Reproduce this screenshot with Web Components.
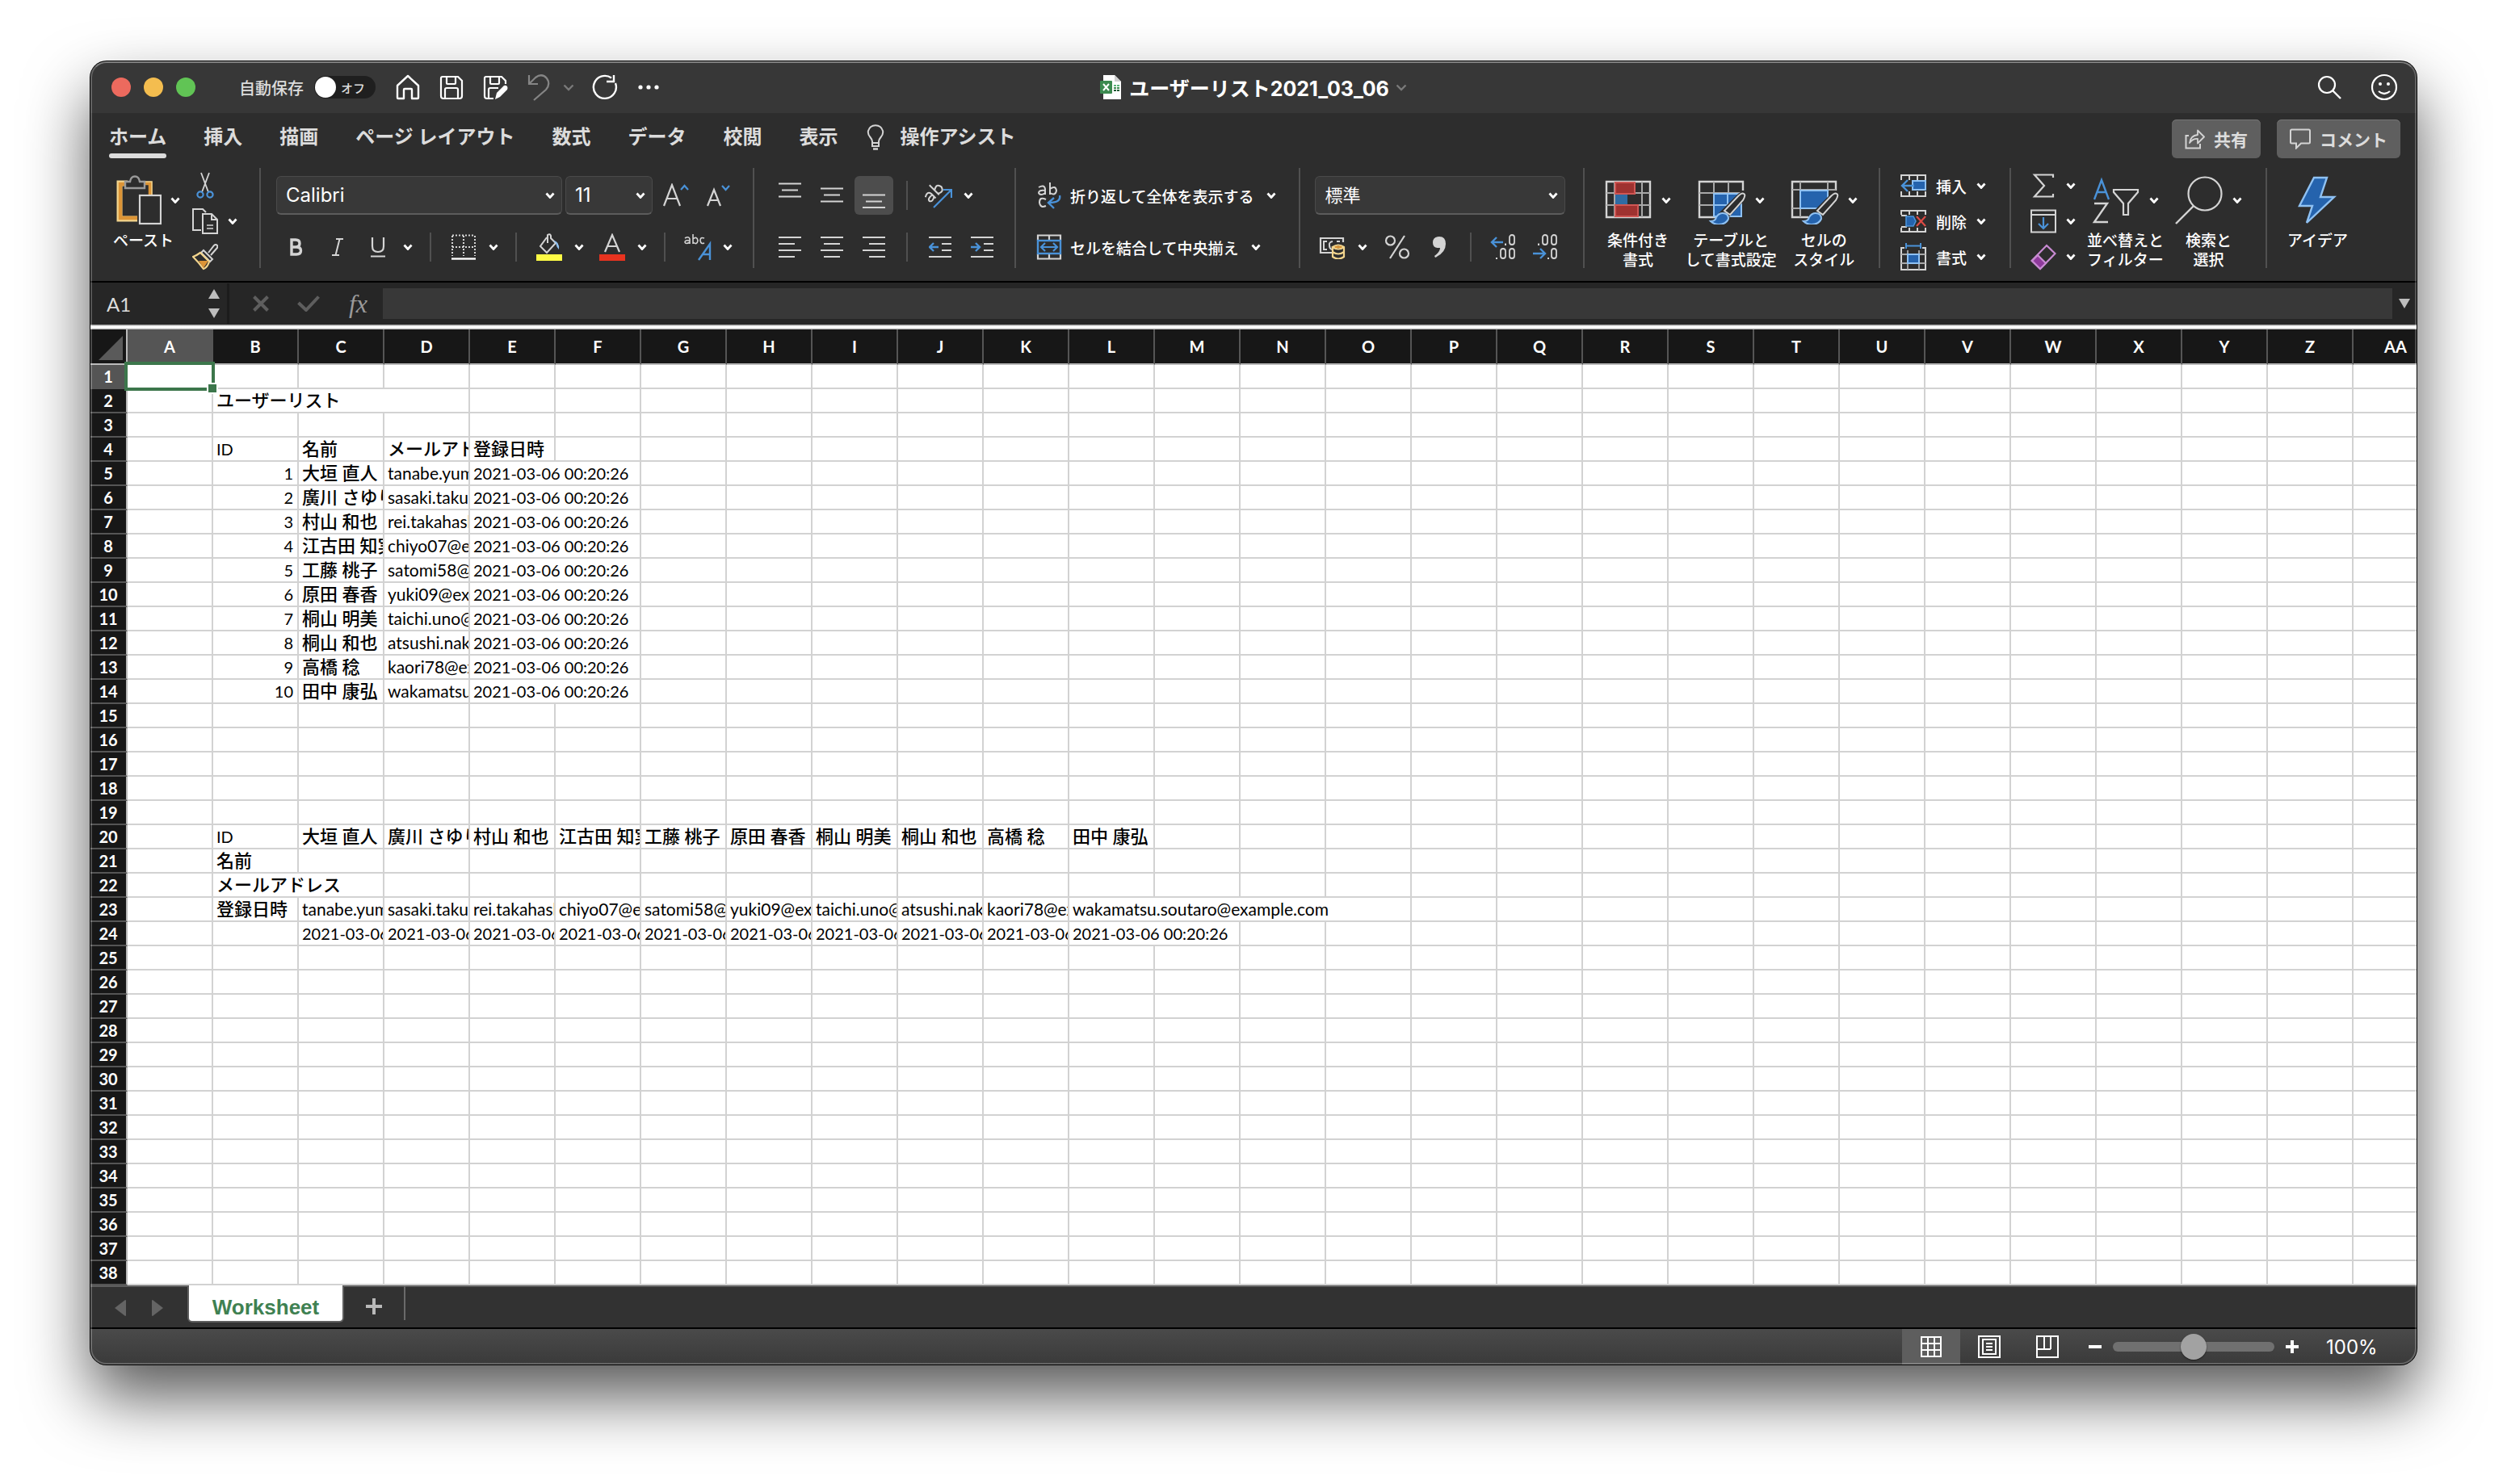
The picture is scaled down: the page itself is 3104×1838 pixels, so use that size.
<!DOCTYPE html>
<html lang="ja">
<head>
<meta charset="utf-8">
<title>ユーザーリスト2021_03_06</title>
<style>
  html { background: #fff; }
  body {
    margin: 0;
    padding: 76px 112px 148px;
    min-height: 100vh;
    box-sizing: border-box;
    overflow: hidden;
    font-family: Inter, "Noto Sans CJK JP", sans-serif;
    background: #fff;
  }
</style>
</head>
<body>
<app-window>
  <title-bar></title-bar>
  <ribbon-tabs></ribbon-tabs>
  <ribbon-bar></ribbon-bar>
  <formula-bar></formula-bar>
  <sheet-grid></sheet-grid>
  <sheet-tabs></sheet-tabs>
  <status-bar></status-bar>
</app-window>

<script>
const G = '#d4d4d4', B = '#4a92d8', LB = '#8fc1f2', FB = '#2563ad';

const ICONS = {
  chevron: [12, 8, `<path d="M1.500 1.500L6 6.500L10.500 1.500" stroke="#fff" stroke-width="2.800"/>`],
  chevronDim: [14, 9, `<path d="M1.500 1.500L7 7L12.500 1.500" stroke="#7a7a7a" stroke-width="2.400"/>`],
  home: [32, 32, `<path d="M3 14L16 2L29 14V29Q29 30 28 30H21V19Q21 18 20 18H12Q11 18 11 19V30H4Q3 30 3 29Z" stroke="#fff" stroke-width="2.400" stroke-linejoin="round"/>`],
  save: [32, 32, `<path d="M5 3H24L29 8V27Q29 30 26 30H6Q3 30 3 27V5Q3 3 5 3Z M10 3V11Q10 12 11 12H20Q21 12 21 11V3 M8 30V19Q8 17 10 17H22Q24 17 24 19V30" stroke="#fff" stroke-width="2.200"/>`],
  saveAs: [32, 32, `<path d="M14 30H6Q3 30 3 27V5Q3 3 5 3H24L29 8V12 M10 3V11Q10 12 11 12H20Q21 12 21 11V3 M8 30V19Q8 17 10 17H20" stroke="#fff" stroke-width="2.200"/><path d="M16 31L18 23L27 14Q29 13 31 15Q32 17 31 19L22 28Z" fill="#fff"/>`],
  undo: [32, 34, `<path d="M4 2V13H15 M4 13L12 5Q20 -1 26 6Q31 13 25 20L10 33" stroke="#858585" stroke-width="2.200"/>`],
  redo: [32, 32, `<path d="M24 4.500A14 14 0 1 0 29 11 M27 1V9H18" stroke="#fff" stroke-width="2.400"/>`],
  dots: [32, 8, `<g fill="#fff"><circle cx="6" cy="4" r="2.600"/><circle cx="16" cy="4" r="2.600"/><circle cx="26" cy="4" r="2.600"/></g>`],
  file: [26, 30, `<path d="M4 0H18L26 8V30H4Z" fill="#fff"/><path d="M18 0V8H26Z" fill="#cfcfcf"/><rect y="7" width="15" height="16" rx="1" fill="#3c8a50"/><path d="M4 11L11 19M11 11L4 19" stroke="#fff" stroke-width="2"/><path d="M17 12H20V14H17ZM21 12H24V14H21Z" fill="#5ab479"/><path d="M17 15H20V17H17ZM21 15H24V17H21Z" fill="#3c8a50"/><path d="M17 18H20V20H17ZM21 18H24V20H21Z" fill="#1f5a33"/>`],
  search: [32, 32, `<circle cx="13" cy="13" r="10" stroke="#fff" stroke-width="2.200"/><path d="M20 20L30 30" stroke="#fff" stroke-width="2.400"/>`],
  smile: [34, 34, `<circle cx="17" cy="17" r="15" stroke="#fff" stroke-width="2.200"/><circle cx="12" cy="13" r="2" fill="#fff"/><circle cx="22" cy="13" r="2" fill="#fff"/><path d="M10 22Q17 28 24 22" stroke="#fff" stroke-width="2.200"/>`],
  bulb: [22, 32, `<path d="M7 23V21Q7 19 4.500 16Q1 12 2 8Q4 1.200 11 1.200Q18 1.200 20 8Q21 12 17.500 16Q15 19 15 21V27H7V23H15" stroke="${G}" stroke-width="2"/><path d="M8 30.500H14" stroke="${G}" stroke-width="2.400"/>`],
  share: [25, 26, `<path d="M5 9H1.500V24.500H19V19" stroke="${G}" stroke-width="2"/><path d="M6 18Q7 9 16 8V2.500L24 10.500L16 18.500V13Q10 12.500 6 18Z" stroke="${G}" stroke-width="1.800" stroke-linejoin="round"/>`],
  comment: [26, 26, `<path d="M2.500 1.500H23.500Q25 1.500 25 3V17Q25 18.500 23.500 18.500H14L8 24.500V18.500H2.500Q1 18.500 1 17V3Q1 1.500 2.500 1.500Z" stroke="${G}" stroke-width="2"/>`],
  paste: [60, 62, `<path d="M18 10H8V54H30" stroke="#f3d58d" stroke-width="7"/><path d="M18 11H9V53H30 M36 10H46V24" stroke="#dc9436" stroke-width="4.500"/><path d="M36 8H48V24" stroke="#f3d58d" stroke-width="1.500"/><path d="M15 16V8H21Q22 1.500 27 1.500Q32 1.500 33 8H39V16Z" fill="#2d2d2d" stroke="#9a9a9a" stroke-width="2.400"/><rect x="33" y="25" width="26" height="35" fill="#2d2d2d" stroke="${G}" stroke-width="2.200"/>`],
  cut: [32, 34, `<path d="M11 1L20 25 M21 1L12 25" stroke="${G}" stroke-width="1.800"/><circle cx="10" cy="28" r="3.600" stroke="${B}" stroke-width="2.200"/><circle cx="22" cy="28" r="3.600" stroke="${B}" stroke-width="2.200"/>`],
  copy: [32, 34, `<path d="M11 28H1V2H13L17 6" stroke="${G}" stroke-width="2"/><path d="M13 8H24L31 15V32H13Z M24 8V15H31" stroke="${G}" stroke-width="2"/><path d="M18 22H26M18 26H26" stroke="${G}" stroke-width="1.600"/>`],
  brush: [32, 34, `<path d="M20 12L27 3Q29 1 31 3Q32 5 30 7L23 15 M14 9L25 20L22 23L11 12Z" stroke="${G}" stroke-width="2"/><path d="M10 12L21 23Q19 30 14 32Q8 24 1 17Q6 15 10 12Z" stroke="#f3d58d" stroke-width="2.200"/><path d="M8 22H20L14 31Z" fill="#dc9436"/>`],
  growA: [34, 30, `<path d="M3 28L13 2L23 28 M7 19H19" stroke="${G}" stroke-width="2.200"/><path d="M24 8L28.500 3L33 8" stroke="${B}" stroke-width="2.200"/>`],
  shrinkA: [34, 30, `<path d="M5 28L13 8L21 28 M8 21H18" stroke="${G}" stroke-width="2.200"/><path d="M23 3L27.500 8L32 3" stroke="${B}" stroke-width="2.200"/>`],
  bold: [20, 24, `<path d="M5 3H10Q15 3 15 7.500Q15 12 10 12H5ZM5 12H11Q16.500 12 16.500 16.500Q16.500 21 11 21H5Z" stroke="${G}" stroke-width="3.400"/>`],
  italic: [20, 24, `<path d="M8 2H17M3 22H12M12.500 2L7.500 22" stroke="${G}" stroke-width="2"/>`],
  underline: [20, 26, `<path d="M3 1V12Q3 19 10 19Q17 19 17 12V1" stroke="${G}" stroke-width="2.200"/><path d="M1 24.500H19" stroke="${G}" stroke-width="2"/>`],
  border: [32, 32, `<path d="M2 1.500H30M2 16H30" stroke="${G}" stroke-width="2" stroke-dasharray="2 2"/><path d="M2 2V27M16 2V27M30 2V27" stroke="${G}" stroke-width="2" stroke-dasharray="2 2"/><path d="M1 30.500H31" stroke="#fff" stroke-width="2.400"/>`],
  fill: [34, 34, `<path d="M14 5L6 16L14 24L25 12L19 6V3Q18 0 15 2V12" stroke="${G}" stroke-width="2"/><path d="M22 9Q30 10 29 20Q26 17 25 12Z" fill="${LB}"/><rect x="1" y="26" width="32" height="8" fill="#fefb45"/>`],
  fontColor: [34, 34, `<path d="M8 23L17 2L26 23M11 16H23" stroke="${G}" stroke-width="2.200"/><rect x="1" y="26" width="32" height="8" fill="#e8331f"/>`],
  phonetic: [36, 34, `<g fill="none" stroke="${G}" stroke-width="1.600"><path d="M2 6Q7 3 8 7V13M8 9Q2 8 2 11Q3 14 8 11M12 1V13M12 7Q17 3 18 9Q17 15 12 11M26 6Q21 4 21 9Q22 14 26 12"/></g><path d="M19 33L33 13V33M24 26H33" stroke="${B}" stroke-width="2.400"/>`],
  alTop: [28, 32, `<path d="M0 1.500H28M4 9.500H24M0 17.500H28" stroke="${G}" stroke-width="2.200"/>`],
  alMid: [28, 32, `<path d="M0 7.500H28M4 15.500H24M0 23.500H28" stroke="${G}" stroke-width="2.200"/>`],
  alBot: [28, 32, `<path d="M0 15.500H28M4 23.500H24M0 31H28" stroke="${G}" stroke-width="2.200"/>`],
  left: [28, 28, `<path d="M0 2H28M0 10H20M0 18H28M0 26H20" stroke="${G}" stroke-width="2.200"/>`],
  center: [28, 28, `<path d="M0 2H28M4 10H24M0 18H28M4 26H24" stroke="${G}" stroke-width="2.200"/>`],
  right: [28, 28, `<path d="M0 2H28M8 10H28M0 18H28M8 26H28" stroke="${G}" stroke-width="2.200"/>`],
  outdent: [28, 28, `<path d="M0 2H28M16 10H28M16 18H28M0 26H28" stroke="${G}" stroke-width="2.200"/><path d="M12 14H1M6 9L1 14L6 19" stroke="${B}" stroke-width="2.400"/>`],
  indent: [28, 28, `<path d="M0 2H28M16 10H28M16 18H28M0 26H28" stroke="${G}" stroke-width="2.200"/><path d="M0 14H11M6 9L11 14L6 19" stroke="${B}" stroke-width="2.400"/>`],
  orient: [34, 32, `<g transform="rotate(-45 10 16)" stroke="${G}" stroke-width="2"><path d="M2 11Q9 7 10 13V21M10 15Q2 14 2 18Q4 22 10 18M16 4V21M16 13Q24 8 25 16Q23 23 16 19"/></g><path d="M11 31L32 10M23 9H33V19" stroke="${B}" stroke-width="2.200"/>`],
  wrap: [32, 34, `<g stroke="${G}" stroke-width="2"><path d="M3 7Q10 3 11 9V16M11 11Q3 10 3 14Q5 18 11 14M17 1V16M17 9Q24 4 25 11Q24 18 17 14M12 22Q4 18 4 26Q5 33 12 30"/></g><path d="M29 17Q31 26 16 26M22 20L15 26L22 33" stroke="${B}" stroke-width="2.400"/>`],
  merge: [32, 32, `<path d="M2 8V1.500H30V8M16 1V8M2 24V30.500H30V24M16 24V31" stroke="${G}" stroke-width="2.200"/><rect x="2" y="8" width="28" height="16" stroke="${B}" stroke-width="2.400"/><path d="M7 16H25M11 11L6 16L11 21M21 11L26 16L21 21" stroke="${B}" stroke-width="2.200"/>`],
  currency: [34, 30, `<path d="M30 9V4H2V22H16" stroke="${G}" stroke-width="2.200"/><path d="M10 8H6V18H10M22 8H26M17 8Q12 9 13 13Q13 17 16 18" stroke="${G}" stroke-width="2"/><path d="M17 15V27Q24 32 31 27V15Q24 10 17 15Q24 20 31 15M17 21Q24 26 31 21" fill="#2d2d2d" stroke="#f3d58d" stroke-width="2.200"/><path d="M20 15H28" stroke="#dc9436" stroke-width="2.400"/>`],
  percent: [32, 32, `<circle cx="7.500" cy="8" r="5.500" stroke="${G}" stroke-width="2.200"/><circle cx="24.500" cy="24" r="5.500" stroke="${G}" stroke-width="2.200"/><path d="M25 2L7 30" stroke="${G}" stroke-width="2.200"/>`],
  comma: [18, 28, `<path d="M9 1Q17 1 17 10Q17 21 4 27L3 25Q10 20 10 15Q1 16 1 8.500Q1 1 9 1Z" fill="${G}"/>`],
  decInc: [34, 34, `<g stroke="${G}" stroke-width="1.800"><rect x="25" y="2" width="6" height="12" rx="3"/><rect x="14" y="19" width="6" height="12" rx="3"/><rect x="25" y="19" width="6" height="12" rx="3"/></g><path d="M19 12.500H21V15H19ZM8 30H10V32H8Z" fill="${G}"/><path d="M17 11H3M9 5L3 11L9 17" stroke="${B}" stroke-width="2.400"/>`],
  decDec: [34, 34, `<g stroke="${G}" stroke-width="1.800"><rect x="14" y="2" width="6" height="12" rx="3"/><rect x="25" y="2" width="6" height="12" rx="3"/><rect x="25" y="19" width="6" height="12" rx="3"/></g><path d="M8 12.500H10V15H8ZM20 30H22V32H20Z" fill="${G}"/><path d="M2 25H17M11 19L17 25L11 31" stroke="${B}" stroke-width="2.400"/>`],
  cond: [60, 60, `<path d="M3 7H57V51H3Z" stroke="${G}" stroke-width="2.400"/><path d="M3 21H57M3 36H57M13 7V51M47 7V51" stroke="#a8a8a8" stroke-width="2"/><rect x="14" y="8" width="24" height="14" fill="#9f3230" stroke="#cf5754" stroke-width="2"/><rect x="14" y="23" width="15" height="12" fill="#2f6ba3"/><rect x="14" y="36" width="28" height="14" fill="#9f3230" stroke="#cf5754" stroke-width="2"/>`],
  table: [60, 60, `<path d="M56 18V7H2V51H22" stroke="${G}" stroke-width="2.400"/><path d="M2 21H56M2 36H20M20 7V51M38 7V21" stroke="#a8a8a8" stroke-width="2"/><path d="M20 22H54V50H20Z" fill="${FB}" stroke="${LB}" stroke-width="2"/><path d="M20 36H50M37 22V50" stroke="${LB}" stroke-width="2"/><path d="M58 20Q62 22 58 30L36 54L26 46L50 22Q55 18 58 20Z" fill="#2d2d2d"/><path d="M57 22Q60 23 56 30L40 48L33 43L50 25Q55 20 57 22Z" stroke="${G}" stroke-width="2"/><path d="M31 46Q38 46 38 53Q35 60 26 60Q20 60 16 56Q22 56 23 51Q26 46 31 46Z" fill="${FB}" stroke="${LB}" stroke-width="2"/>`],
  style: [60, 60, `<path d="M56 18V7H2V51H22" stroke="${G}" stroke-width="2.400"/><path d="M2 17H56M2 40H20M12 7V51M46 7V17" stroke="#a8a8a8" stroke-width="2"/><path d="M12 18H46V40H12Z" fill="${FB}" stroke="${LB}" stroke-width="2"/><path d="M58 20Q62 22 58 30L36 54L26 46L50 22Q55 18 58 20Z" fill="#2d2d2d"/><path d="M57 22Q60 23 56 30L40 48L33 43L50 25Q55 20 57 22Z" stroke="${G}" stroke-width="2"/><path d="M31 46Q38 46 38 53Q35 60 26 60Q20 60 16 56Q22 56 23 51Q26 46 31 46Z" fill="${FB}" stroke="${LB}" stroke-width="2"/>`],
  insert: [32, 30, `<path d="M1 8V2H31V8M1 22V28H31V22M11 2V8M21 2V8M11 22V28M21 22V28" stroke="${G}" stroke-width="2"/><rect x="15" y="9" width="16" height="11" fill="${FB}" stroke="${LB}" stroke-width="2"/><path d="M17 15H2M9 8L2 15L9 22" stroke="${B}" stroke-width="2.400"/>`],
  remove: [32, 30, `<path d="M1 7V2H31V7M11 2V7M21 2V7M1 23V28H31V23M11 23V28M21 23V28M1 8H8M1 22H8" stroke="${G}" stroke-width="2"/><path d="M7 9H16L19 15L16 21H7Z" fill="${FB}" stroke="${B}" stroke-width="1.600"/><path d="M20 9L31 21M31 9L20 21" stroke="#dd4b45" stroke-width="2.200"/>`],
  format: [32, 34, `<path d="M5 6H1V33H31V6H27" stroke="${G}" stroke-width="2"/><path d="M1 14H31M1 25H31M9 9V33M23 9V33" stroke="#a8a8a8" stroke-width="1.800"/><rect x="9" y="14" width="14" height="11" fill="${FB}" stroke="${LB}" stroke-width="2"/><path d="M7 0V7M25 0V7M7 3.500H25" stroke="${B}" stroke-width="2"/>`],
  sigma: [32, 30, `<path d="M28 5V1.500H5L17 15L5 28.500H28V25" stroke="${G}" stroke-width="2.200"/>`],
  fillDown: [32, 30, `<path d="M1 1.500H31V28.500H1ZM1 7H31" stroke="${G}" stroke-width="2"/><path d="M16 10V24M10 18L16 24L22 18" stroke="${B}" stroke-width="2.200"/>`],
  eraser: [32, 34, `<path d="M1.500 22L20 3L30.500 13L12 32Z" stroke="#c88bd2" stroke-width="2.200"/><path d="M2 22L9 15L19 25L12 32Z" fill="#8f3a9c" stroke="#c88bd2" stroke-width="2.200"/>`],
  sort: [60, 60, `<path d="M3 29L12 5L21 29M6 20H18" stroke="${B}" stroke-width="2.400"/><path d="M3 34H19L3 57H20" stroke="${G}" stroke-width="2.400"/><path d="M27 17H57V20L45 34V48H39V34L27 20Z" stroke="${G}" stroke-width="2.200"/>`],
  find: [60, 60, `<circle cx="37" cy="22" r="20.500" stroke="${G}" stroke-width="2.200"/><path d="M23 37L1 59" stroke="${G}" stroke-width="2.400"/>`],
  idea: [60, 60, `<path d="M26 2H42L34 26H51L17 58L24 37H8Z" fill="${FB}" stroke="${LB}" stroke-width="2.400"/>`],
  cancel: [20, 20, `<path d="M1.500 1.500L18.500 18.500M18.500 1.500L1.500 18.500" stroke="#5e5e5e" stroke-width="4"/>`],
  check: [28, 20, `<path d="M1.500 9L11 18L26.500 1.500" stroke="#5e5e5e" stroke-width="4"/>`],
  up: [14, 12, `<path d="M7 0L14 12H0Z" fill="#bdbdbd"/>`],
  down: [14, 12, `<path d="M7 12L14 0H0Z" fill="#bdbdbd"/>`],
  corner: [30, 30, `<path d="M30 0V30H0Z" fill="#5a5a5a"/>`],
  prev: [14, 20, `<path d="M14 1Q14 0 13 0L0 10L13 20Q14 20 14 19Z" fill="#646464"/>`],
  next: [14, 20, `<path d="M0 1Q0 0 1 0L14 10L1 20Q0 20 0 19Z" fill="#646464"/>`],
  plus: [20, 20, `<path d="M10 0V20M0 10H20" stroke="#b9b9b9" stroke-width="4"/>`],
  viewGrid: [28, 28, `<path d="M2 2H26V26H2ZM2 10H26M2 18H26M10 2V26M18 2V26" stroke="#fff" stroke-width="2"/>`],
  viewPage: [28, 28, `<path d="M1 1H27V27H1ZM6 5H22V23H6ZM10 10H18M10 14H18M10 18H18" stroke="#fff" stroke-width="2"/>`],
  viewBreak: [28, 28, `<path d="M1 1H27V27H1ZM10 2V17M18 2V17M1 17H18" stroke="#fff" stroke-width="2"/>`],
  zoomOut: [16, 16, `<path d="M0 8H16" stroke="#fff" stroke-width="4"/>`],
  zoomIn: [16, 16, `<path d="M8 0V16M0 8H16" stroke="#fff" stroke-width="4"/>`]
};

const BASE = `
  :host, *, *::before, *::after { box-sizing: border-box; }
  button, input, select { font: inherit; color: inherit; background: none; border: 0; padding: 0; margin: 0; }
  button { display: flex; align-items: center; justify-content: center; }
`;

function define(name, css, html) {
  const tpl = document.createElement('template');
  customElements.define(name, class extends HTMLElement {
    connectedCallback() {
      if (this.shadowRoot) return;
      tpl.innerHTML = `<style>${BASE}${css}</style>${typeof html === 'function' ? html(this) : html}`;
      this.attachShadow({ mode: 'open' }).append(tpl.content.cloneNode(true));
    }
  });
}

const icon = n => `<ui-icon name="${n}"></ui-icon>`;

define('ui-icon', `:host { display: block; flex: none; line-height: 0; } svg { display: block; }`,
  el => {
    const [w, h, body] = ICONS[el.getAttribute('name')];
    return `<svg width="${w}" height="${h}" viewBox="0 0 ${w} ${h}" fill="none" aria-hidden="true">${body}</svg>`;
  });

define('app-window', `
  :host {
    display: flex; flex-direction: column; position: relative; overflow: hidden;
    border-radius: 20px; background: #2d2d2d; color: #fff;
    box-shadow: 0 0 0 1px #000, 0 40px 80px rgba(0, 0, 0, .66);
  }
  :host::after {
    content: ""; position: absolute; inset: 0; pointer-events: none;
    border: 2px solid rgba(255, 255, 255, .22); border-top-color: rgba(255, 255, 255, .36); border-radius: 20px;
  }
`, `<slot></slot>`);

define('title-bar', `
  :host { display: grid; grid-template-columns: 1fr auto 1fr; align-items: center; height: 64px; background: #373737; }
  .left, .quick, .title, .right, .auto, .lights, .undo { display: flex; align-items: center; }
  .left { padding-left: 26px; }
  .lights { gap: 16px; margin-right: 54px; }
  .lights button { width: 24px; height: 24px; border-radius: 50%; }
  .close { background: #ec6a5e; } .min { background: #f4bd4f; } .max { background: #61c455; }
  .auto { gap: 13px; font-size: 20px; font-weight: 500; color: #dcdcdc; margin-right: 24px; }
  .switch { display: flex; align-items: center; gap: 6px; width: 76px; height: 28px; border-radius: 14px; background: #1f1f1f; font-size: 15px; padding-left: 1px; }
  .switch input { appearance: none; width: 26px; height: 26px; border-radius: 50%; background: #fff; }
  .quick { gap: 22px; }
  .undo { gap: 14px; }
  .title { gap: 10px; font-size: 25px; font-weight: 700; }
  .name { display: flex; align-items: center; gap: 8px; }
  h1 { font: inherit; margin: 0; white-space: nowrap; }
  .right { justify-content: flex-end; gap: 35px; padding-right: 23px; }
`, `
  <div class="left">
    <div class="lights"><button class="close" aria-label="閉じる"></button><button class="min" aria-label="しまう"></button><button class="max" aria-label="拡大"></button></div>
    <label class="auto">自動保存<span class="switch"><input type="checkbox" role="switch">オフ</span></label>
    <div class="quick">
      <button aria-label="ホーム">${icon('home')}</button>
      <button aria-label="保存">${icon('save')}</button>
      <button aria-label="別名で保存">${icon('saveAs')}</button>
      <div class="undo"><button aria-label="元に戻す">${icon('undo')}</button><button aria-label="元に戻す履歴">${icon('chevronDim')}</button></div>
      <button aria-label="やり直す">${icon('redo')}</button>
      <button aria-label="その他">${icon('dots')}</button>
    </div>
  </div>
  <div class="title">${icon('file')}<div class="name"><h1>ユーザーリスト2021_03_06</h1>${icon('chevronDim')}</div></div>
  <div class="right"><button aria-label="検索">${icon('search')}</button><button aria-label="フィードバック">${icon('smile')}</button></div>
`);

define('ribbon-tabs', `
  :host { display: flex; justify-content: space-between; height: 68px; padding: 0 20px 0 23px; font-size: 24px; font-weight: 700; color: #dcdcdc; }
  nav, .tabs { display: flex; gap: 46px; }
  nav { gap: 36px; }
  a { color: inherit; text-decoration: none; line-height: 36px; padding-top: 12px; white-space: nowrap; }
  a[aria-current]::after { content: ""; display: block; height: 6px; margin-top: 2px; border-radius: 3px; background: #dcdcdc; }
  .assist { display: flex; align-items: center; gap: 19px; height: 48px; }
  .actions { display: flex; gap: 20px; padding-top: 8px; }
  .actions button { height: 48px; gap: 11px; padding: 0 16px; border-radius: 6px; background: #5f5f5f; font-size: 21px; box-shadow: inset 0 1px #747474; }
`, `
  <nav>
    <div class="tabs">
      <a href="#" aria-current="page">ホーム</a><a href="#">挿入</a><a href="#">描画</a><a href="#">ページ レイアウト</a><a href="#">数式</a><a href="#">データ</a><a href="#">校閲</a><a href="#">表示</a>
    </div>
    <a href="#" class="assist">${icon('bulb')}操作アシスト</a>
  </nav>
  <div class="actions"><button>${icon('share')}共有</button><button>${icon('comment')}コメント</button></div>
`);

define('ribbon-group', `
  :host { display: flex; height: 124px; border-right: 2px solid #505050; }
  :host([last]) { border-right: 0; }
`, `<slot></slot>`);

define('tool-button', `
  :host { display: block; flex: none; }
  button { width: 48px; height: 48px; border-radius: 6px; }
  button[aria-pressed] { background: #4d4d4d; }
`, el => `<button aria-label="${el.getAttribute('label')}"${el.hasAttribute('pressed') ? ' aria-pressed="true"' : ''}>${icon(el.getAttribute('icon'))}</button>`);

define('split-button', `
  :host { display: flex; flex: none; }
  .main { width: 44px; height: 48px; }
  .more { width: 30px; height: 48px; }
`, el => `<button class="main" aria-label="${el.getAttribute('label')}">${icon(el.getAttribute('icon'))}</button><button class="more" aria-label="${el.getAttribute('label')}のオプション">${icon('chevron')}</button>`);

define('wide-button', `
  :host { display: flex; flex: none; font-size: 19px; font-weight: 500; }
  button { height: 48px; white-space: nowrap; }
  .pic { width: 44px; display: flex; justify-content: center; margin-right: 4px; }
  ui-icon[name=chevron] { margin-left: 16px; }
`, el => `<button><span class="pic">${icon(el.getAttribute('icon'))}</span><slot></slot>${icon('chevron')}</button>`);

define('stack-button', `
  :host { display: block; flex: none; font-size: 19px; font-weight: 500; }
  button { height: 44px; gap: 12px; white-space: nowrap; }
  .pic { width: 32px; display: flex; justify-content: center; }
`, el => `<button${el.hasAttribute('label') ? ` aria-label="${el.getAttribute('label')}"` : ''}><span class="pic">${icon(el.getAttribute('icon'))}</span>${el.hasAttribute('label') ? '' : '<slot></slot>'}${el.hasAttribute('plain') ? '' : icon('chevron')}</button>`);

define('big-button', `
  :host { display: block; flex: none; font-size: 19px; font-weight: 500; }
  button { flex-direction: column; align-items: center; padding-top: 10px; line-height: 24px; }
  :host([start]) button { align-items: flex-start; }
  .pic { display: flex; align-items: center; gap: 11px; height: 60px; margin-bottom: 9px; }
`, el => `<button><span class="pic">${icon(el.getAttribute('icon'))}${el.hasAttribute('plain') ? '' : icon('chevron')}</span><slot></slot></button>`);

define('drop-down', `
  :host { display: grid; align-items: center; height: 48px; border-radius: 6px; background: #383838; border: 1px solid #4a4a4a; border-bottom: 2px solid #5c5c5c; font-size: 24px; }
  select { grid-area: 1 / 1; appearance: none; width: 100%; height: 100%; padding-left: 11px; outline: 0; }
  ui-icon { grid-area: 1 / 1; justify-self: end; margin-right: 8px; pointer-events: none; }
`, el => `<select aria-label="${el.getAttribute('label')}"><option>${el.getAttribute('value')}</option></select>${icon('chevron')}`);

define('ribbon-bar', `
  :host { display: flex; padding-bottom: 16px; border-bottom: 2px solid #000; color: #fff; }
  .rows { display: flex; flex-direction: column; gap: 16px; padding-top: 10px; }
  .row { display: flex; align-items: center; gap: 4px; height: 48px; }
  .row i { flex: none; width: 2px; height: 36px; background: #505050; margin: 0 14px 0 8px; }
  .stack { display: flex; flex-direction: column; align-items: flex-start; }
  .paste { padding: 0 27px 0 28px; } .paste .stack { margin-left: 15px; }
  .font { padding: 0 16px 0 19px; }
  .align { padding: 0 16px 0 20px; } .align .row i { margin: 0 12px; }
  .wrap { padding: 0 28px 0 19px; }
  .num { padding: 0 22px 0 18px; } .num .row i { margin: 0 11px 0 10px; }
  .styles { padding: 0 26px 0 24px; gap: 17px; }
  .cells { padding: 0 29px 0 25px; }
  .edit { padding: 0 29px 0 24px; gap: 14px; }
  .idea { padding-left: 25px; }
  .family { width: 354px; } .size { width: 108px; } .format { width: 310px; font-size: 22px; }
`, `
  <ribbon-group class="paste">
    <big-button icon="paste" start>ペースト</big-button>
    <div class="stack">
      <stack-button icon="cut" label="切り取り" plain></stack-button>
      <stack-button icon="copy" label="コピー"></stack-button>
      <stack-button icon="brush" label="書式のコピー" plain></stack-button>
    </div>
  </ribbon-group>
  <ribbon-group class="font"><div class="rows">
    <div class="row"><drop-down class="family" label="フォント" value="Calibri"></drop-down><drop-down class="size" label="サイズ" value="11"></drop-down><tool-button icon="growA" label="拡大"></tool-button><tool-button icon="shrinkA" label="縮小"></tool-button></div>
    <div class="row"><tool-button icon="bold" label="太字"></tool-button><tool-button icon="italic" label="斜体"></tool-button><split-button icon="underline" label="下線"></split-button><i></i><split-button icon="border" label="罫線"></split-button><i></i><split-button icon="fill" label="塗りつぶし"></split-button><split-button icon="fontColor" label="文字色"></split-button><i></i><split-button icon="phonetic" label="ふりがな"></split-button></div>
  </div></ribbon-group>
  <ribbon-group class="align"><div class="rows">
    <div class="row"><tool-button icon="alTop" label="上揃え"></tool-button><tool-button icon="alMid" label="上下中央"></tool-button><tool-button icon="alBot" label="下揃え" pressed></tool-button><i></i><split-button icon="orient" label="方向"></split-button></div>
    <div class="row"><tool-button icon="left" label="左揃え"></tool-button><tool-button icon="center" label="中央揃え"></tool-button><tool-button icon="right" label="右揃え"></tool-button><i></i><tool-button icon="outdent" label="字下げ解除"></tool-button><tool-button icon="indent" label="字下げ"></tool-button></div>
  </div></ribbon-group>
  <ribbon-group class="wrap"><div class="rows">
    <wide-button icon="wrap">折り返して全体を表示する</wide-button>
    <wide-button icon="merge">セルを結合して中央揃え</wide-button>
  </div></ribbon-group>
  <ribbon-group class="num"><div class="rows">
    <drop-down class="format" label="表示形式" value="標準"></drop-down>
    <div class="row"><split-button icon="currency" label="通貨"></split-button><tool-button icon="percent" label="パーセント"></tool-button><tool-button icon="comma" label="桁区切り"></tool-button><i></i><tool-button icon="decInc" label="小数点以下を増やす"></tool-button><tool-button icon="decDec" label="小数点以下を減らす"></tool-button></div>
  </div></ribbon-group>
  <ribbon-group class="styles">
    <big-button icon="cond">条件付き<br>書式</big-button>
    <big-button icon="table">テーブルと<br>して書式設定</big-button>
    <big-button icon="style">セルの<br>スタイル</big-button>
  </ribbon-group>
  <ribbon-group class="cells"><div class="stack">
    <stack-button icon="insert">挿入</stack-button>
    <stack-button icon="remove">削除</stack-button>
    <stack-button icon="format">書式</stack-button>
  </div></ribbon-group>
  <ribbon-group class="edit">
    <div class="stack">
      <stack-button icon="sigma" label="合計"></stack-button>
      <stack-button icon="fillDown" label="フィル"></stack-button>
      <stack-button icon="eraser" label="クリア"></stack-button>
    </div>
    <big-button icon="sort">並べ替えと<br>フィルター</big-button>
    <big-button icon="find">検索と<br>選択</big-button>
  </ribbon-group>
  <ribbon-group class="idea" last><big-button icon="idea" plain>アイデア</big-button></ribbon-group>
`);

define('formula-bar', `
  :host { display: flex; align-items: center; height: 52px; background: #262626; }
  .name { display: flex; align-items: center; width: 172px; height: 50px; padding: 0 9px 0 20px; border-right: 3px solid #1c1c1c; }
  .name input { flex: 1; min-width: 0; font: 24px Lato, "Noto Sans CJK JP", sans-serif; color: #dcdcdc; }
  .step { display: flex; flex-direction: column; gap: 12px; }
  .acts { display: flex; align-items: center; justify-content: space-between; width: 190px; padding: 0 19px 0 29px; }
  .fx { font: italic 32px "Liberation Serif", serif; color: #9a9a9a; line-height: 40px; }
  .text { flex: 1; min-width: 0; height: 38px; background: #383838; }
  .open { width: 30px; }
`, `
  <div class="name"><input aria-label="名前ボックス" value="A1"><div class="step"><button aria-label="上へ">${icon('up')}</button><button aria-label="下へ">${icon('down')}</button></div></div>
  <div class="acts"><button aria-label="キャンセル">${icon('cancel')}</button><button aria-label="入力">${icon('check')}</button><button class="fx">fx</button></div>
  <input class="text" aria-label="数式バー">
  <button class="open" aria-label="数式バーを広げる">${icon('down')}</button>
`);

const NAMES = ['大垣 直人', '廣川 さゆり', '村山 和也', '江古田 知実', '工藤 桃子', '原田 春香', '桐山 明美', '桐山 和也', '高橋 稔', '田中 康弘'];
const MAILS = ['tanabe.yum', 'sasaki.takum', 'rei.takahash', 'chiyo07@ex', 'satomi58@', 'yuki09@exa', 'taichi.uno@', 'atsushi.nak', 'kaori78@ex', 'wakamatsu.soutaro@example.com'];
const STAMP = '2021-03-06 00:20:26';
const COLS = 27, ROWS = 38;
const colName = i => i < 26 ? String.fromCharCode(65 + i) : 'A' + String.fromCharCode(39 + i);

/* key: "row:col" (col A = 0); value: text, columns it runs over, class */
const CELLS = {};
const put = (r, c, text, span = 1, cls = '') => { CELLS[r + ':' + c] = { text, span, cls }; };
put(2, 1, 'ユーザーリスト', 3);
put(4, 1, 'ID'); put(4, 2, '名前'); put(4, 3, 'メールアドレス'); put(4, 4, '登録日時');
NAMES.forEach((n, i) => {
  put(5 + i, 1, i + 1, 1, 'n'); put(5 + i, 2, n); put(5 + i, 3, MAILS[i], 1, 'm'); put(5 + i, 4, STAMP, 2);
  put(20, 2 + i, n);
  put(23, 2 + i, MAILS[i], i === 9 ? 4 : 1, 'm');
  put(24, 2 + i, STAMP, i === 9 ? 2 : 1);
});
put(20, 1, 'ID'); put(21, 1, '名前'); put(22, 1, 'メールアドレス', 2); put(23, 1, '登録日時');

function gridHTML() {
  let h = `<div class="strip"></div><table><colgroup><col class="rh">${'<col>'.repeat(COLS)}</colgroup><thead><tr><th class="corner">${icon('corner')}</th>`;
  for (let c = 0; c < COLS; c++) h += `<th scope="col"${c ? '' : ' class="on"'}>${colName(c)}</th>`;
  h += '</tr></thead><tbody>';
  for (let r = 1; r <= ROWS; r++) {
    h += `<tr><th scope="row"${r === 1 ? ' class="on"' : ''}>${r}</th>`;
    for (let c = 0; c < COLS; c++) {
      const d = CELLS[r + ':' + c];
      if (r === 1 && c === 0) h += '<td class="sel"><div class="ring"></div></td>';
      else if (d) {
        const cjk = /[^\x00-\x7f]/.test(d.text) ? ' j' : '';
        h += `<td colspan="${d.span}" class="${d.cls}${cjk}">${d.text}</td>`;
        c += d.span - 1;
      } else h += '<td></td>';
    }
    h += '</tr>';
  }
  return h + '</tbody></table>';
}

define('sheet-grid', `
  :host { display: block; overflow: hidden; background: #fff; color: #000; font-family: Lato, "Noto Sans CJK JP", sans-serif; font-size: 20px; }
  .strip { height: 6px; background: linear-gradient(#8e8e8e, #fff 40%, #fff 60%, #b0b0b0); }
  table { table-layout: fixed; border-collapse: separate; border-spacing: 0; width: 2908px; }
  col { width: 106px; } col.rh { width: 46px; }
  th { background: #171717; color: #fff; font-size: 20px; font-weight: 700; padding: 0; border: 0 solid #555; text-align: center; line-height: 28px; }
  thead th { height: 44px; border-right-width: 2px; border-bottom: 2px solid #bababa; }
  tbody th { height: 30px; border-bottom-width: 2px; border-right: 2px solid #bababa; }
  thead th.corner { border-right-color: #bababa; }
  .corner ui-icon { margin: 4px 0 0 10px; }
  th.on { background: #555; }
  td { height: 30px; padding: 0 0 0 4px; border: 0 solid #d2d2d2; border-width: 0 2px 2px 0; line-height: 28px; white-space: nowrap; overflow: hidden; }
  td.m { font-size: 21px; }
  td.j { font-size: 22px; font-weight: 500; }
  td.n { text-align: right; padding: 0 5px 0 0; }
  td.sel { position: relative; overflow: visible; padding: 0; }
  .ring { position: absolute; inset: -4px; border: 4px solid #3c764b; }
  .ring::after { content: ""; position: absolute; right: -6px; bottom: -6px; width: 10px; height: 10px; background: #3c764b; box-shadow: 0 0 0 2px #fff; }
`, gridHTML);

define('sheet-tabs', `
  :host { display: flex; align-items: flex-start; height: 52px; background: #323232; box-shadow: inset 0 2px #5e5e5e; padding-left: 30px; }
  .nav { display: flex; gap: 32px; padding: 18px 30px 0 0; }
  a { display: block; width: 194px; height: 46px; border: 2px solid #5e5e5e; border-top: 0; border-radius: 0 0 6px 6px; background: #fff; color: #3f8152; font: 700 26px/54px "Liberation Sans", sans-serif; text-align: center; text-decoration: none; }
  .add { width: 74px; height: 52px; border: 0; }
  i { width: 2px; height: 43px; background: #6a6a6a; }
`, `
  <div class="nav"><button aria-label="前のシート">${icon('prev')}</button><button aria-label="次のシート">${icon('next')}</button></div>
  <a href="#">Worksheet</a>
  <button class="add" aria-label="シートを追加">${icon('plus')}</button><i></i>
`);

define('status-bar', `
  :host { display: flex; justify-content: flex-end; align-items: center; height: 46px; padding-right: 48px; border-top: 2px solid #000; background: linear-gradient(#4a4a4a, #3a3a3a); color: #fff; }
  .view { width: 72px; height: 44px; }
  .view[aria-pressed] { background: #5e5e5e; }
  .zoom { display: flex; align-items: center; gap: 14px; padding-left: 15px; }
  input { appearance: none; width: 200px; height: 12px; border-radius: 6px; background: #707070; }
  input::-webkit-slider-thumb { appearance: none; width: 32px; height: 32px; border-radius: 50%; background: #a2a2a2; box-shadow: 0 1px 2px rgba(0, 0, 0, .5); }
  output { margin-left: 20px; width: 64px; font-size: 24px; white-space: nowrap; }
`, `
  <button class="view" aria-label="標準" aria-pressed="true">${icon('viewGrid')}</button>
  <button class="view" aria-label="ページ レイアウト">${icon('viewPage')}</button>
  <button class="view" aria-label="改ページ">${icon('viewBreak')}</button>
  <div class="zoom"><button aria-label="縮小">${icon('zoomOut')}</button><input type="range" aria-label="ズーム" min="0" max="200" value="100"><button aria-label="拡大">${icon('zoomIn')}</button><output>100%</output></div>
`);
</script>
</body>
</html>
